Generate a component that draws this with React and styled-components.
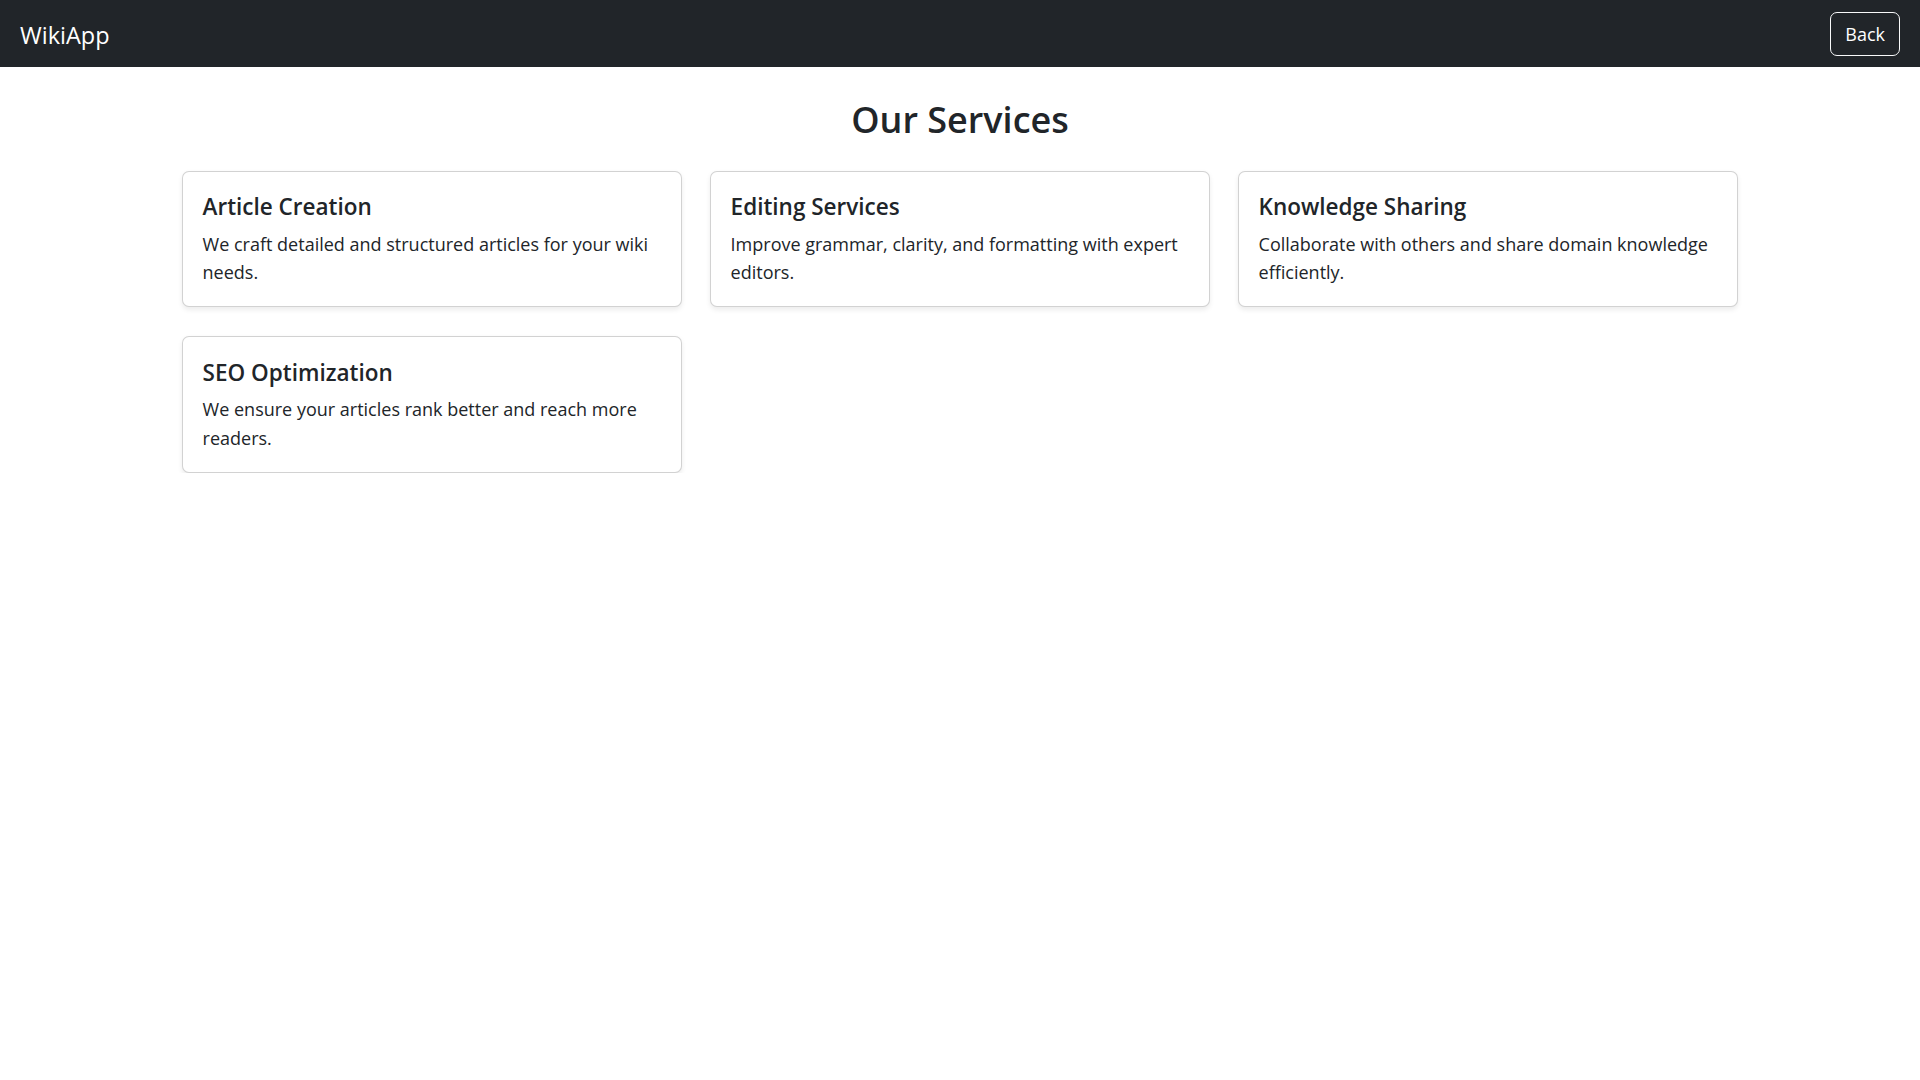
import React from "react";
import styled, { createGlobalStyle } from "styled-components";

const GlobalStyle = createGlobalStyle`
  * {
    box-sizing: border-box;
  }
  body {
    margin: 0;
    background: #ffffff;
    color: #212529;
    font-family: "Open Sans", "Noto Sans", sans-serif;
  }
`;

const Navbar = styled.nav`
  height: 67px;
  background-color: #212529;
  display: flex;
  align-items: center;
  justify-content: space-between;
  padding: 0 20px;
`;

const Brand = styled.a`
  color: #ffffff;
  font-size: 23.5px;
  line-height: 30px;
  text-decoration: none;
  margin-top: 2px;
`;

const BackBtn = styled.button`
  height: 44px;
  padding: 0 14px;
  background: transparent;
  color: #ffffff;
  border: 1px solid #f8f9fa;
  border-radius: 7px;
  font-family: "Open Sans", "Noto Sans", sans-serif;
  font-size: 18px;
  cursor: pointer;
`;

const Container = styled.main`
  width: 1584px;
  margin: 0 auto;
  padding: 30px 14.4px 0;
`;

const Heading = styled.h2`
  margin: 0 0 28px;
  text-align: center;
  font-size: 36px;
  font-weight: 600;
  line-height: 46px;
  color: #212529;
`;

const Grid = styled.div`
  display: grid;
  grid-template-columns: repeat(3, 1fr);
  gap: 29px 28.8px;
`;

const Card = styled.div`
  background: #ffffff;
  border: 1px solid rgba(0, 0, 0, 0.175);
  border-radius: 7px;
  box-shadow: 0 2.4px 4.8px rgba(0, 0, 0, 0.075);
  padding: 21.2px 19.2px 19.2px;
`;

const CardTitle = styled.h5`
  margin: 0 0 7.6px;
  font-size: 22.5px;
  font-weight: 600;
  line-height: 28.8px;
  color: #212529;
`;

const CardText = styled.p`
  margin: 0;
  font-size: 18px;
  line-height: 28.8px;
  color: #212529;
`;

const services = [
  {
    title: "Article Creation",
    text: "We craft detailed and structured articles for your wiki needs.",
  },
  {
    title: "Editing Services",
    text: "Improve grammar, clarity, and formatting with expert editors.",
  },
  {
    title: "Knowledge Sharing",
    text: "Collaborate with others and share domain knowledge efficiently.",
  },
  {
    title: "SEO Optimization",
    text: "We ensure your articles rank better and reach more readers.",
  },
];

export default function App() {
  return (
    <>
      <GlobalStyle />
      <Navbar>
        <Brand href="#">WikiApp</Brand>
        <BackBtn>Back</BackBtn>
      </Navbar>
      <Container>
        <Heading>Our Services</Heading>
        <Grid>
          {services.map((s) => (
            <Card key={s.title}>
              <CardTitle>{s.title}</CardTitle>
              <CardText>{s.text}</CardText>
            </Card>
          ))}
        </Grid>
      </Container>
    </>
  );
}
